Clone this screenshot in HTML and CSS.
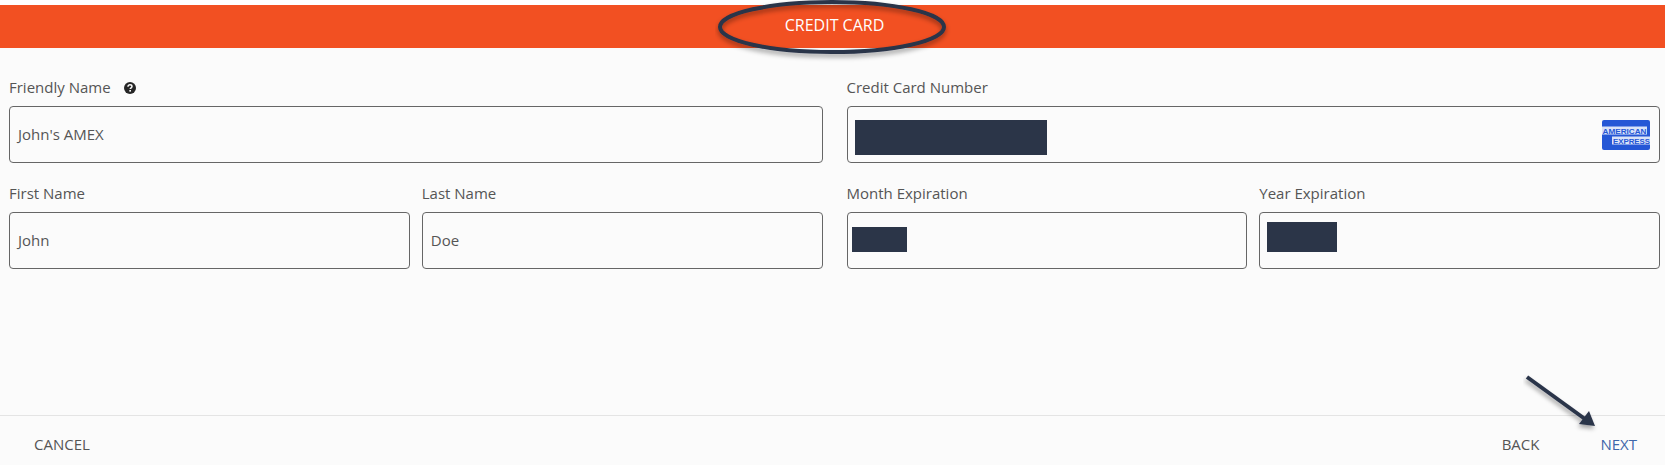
FILE: index.html
```html
<!DOCTYPE html>
<html lang="en">
<head>
  <meta charset="UTF-8" />
  <title>Credit Card</title>
  <link rel="stylesheet" href="styles.css">
</head>
<body>
  <div class="header">CREDIT CARD</div>

  <!-- callout ring around the title -->
  <svg class="ring" width="240" height="66" viewBox="0 0 240 66">
    <defs>
      <filter id="soft" x="-20%" y="-30%" width="140%" height="170%">
        <feDropShadow dx="0" dy="3" stdDeviation="2.5" flood-color="#000" flood-opacity="0.4" />
      </filter>
    </defs>
    <ellipse cx="117" cy="27" rx="112" ry="25" fill="none" stroke="#2a344a" stroke-width="4" filter="url(#soft)" />
  </svg>

  <div class="form">
    <div class="col">
      <div class="row">
        <div class="group">
          <div class="lbl">Friendly Name
            <svg class="help" width="12" height="12" viewBox="0 0 12 12">
              <circle cx="6" cy="6" r="6" fill="#262626" />
              <path d="M4 4.7C4 3.5 4.9 2.8 6 2.8S8 3.5 8 4.5C8 5.8 6.2 5.8 6.2 7.1" fill="none" stroke="#fbfbfb" stroke-width="1.5" />
              <rect x="5.3" y="8" width="1.7" height="1.6" fill="#fbfbfb" />
            </svg>
          </div>
          <div class="field">John's AMEX</div>
        </div>
      </div>
      <div class="row">
        <div class="group">
          <div class="lbl">First Name</div>
          <div class="field">John</div>
        </div>
        <div class="group">
          <div class="lbl">Last Name</div>
          <div class="field">Doe</div>
        </div>
      </div>
    </div>

    <div class="col">
      <div class="row">
        <div class="group">
          <div class="lbl">Credit Card Number</div>
          <div class="field">
            <span class="redact redact-card"></span>
            <svg class="amex" width="48" height="30" viewBox="0 0 48 30">
              <rect width="48" height="30" rx="2" fill="#2557d6" />
              <rect x="0" y="6.5" width="45" height="8" fill="#d9e2f8" />
              <rect x="10" y="16.5" width="38" height="8" fill="#d9e2f8" />
              <text class="amex-text" x="0.5" y="13.5" textLength="44" lengthAdjust="spacingAndGlyphs">AMERICAN</text>
              <text class="amex-text" x="11" y="23.5" textLength="37" lengthAdjust="spacingAndGlyphs">EXPRESS</text>
            </svg>
          </div>
        </div>
      </div>
      <div class="row">
        <div class="group">
          <div class="lbl">Month Expiration</div>
          <div class="field"><span class="redact redact-month"></span></div>
        </div>
        <div class="group">
          <div class="lbl">Year Expiration</div>
          <div class="field"><span class="redact redact-year"></span></div>
        </div>
      </div>
    </div>
  </div>

  <div class="footer">
    <a class="action">CANCEL</a>
    <div class="right">
      <a class="action">BACK</a>
      <a class="action next">NEXT</a>
    </div>
  </div>

  <!-- callout arrow pointing at NEXT -->
  <svg class="arrow" width="90" height="70" viewBox="0 0 90 70">
    <defs>
      <filter id="soft2" x="-20%" y="-20%" width="150%" height="150%">
        <feDropShadow dx="-1" dy="3" stdDeviation="2" flood-color="#000" flood-opacity="0.35" />
      </filter>
    </defs>
    <g filter="url(#soft2)" fill="#2a344a">
      <path d="M4 5L62 47" stroke="#2a344a" stroke-width="4" />
      <path d="M72 54L56 52L66 39Z" />
    </g>
  </svg>
</body>
</html>
```

FILE: styles.css
```css
html, body {
  margin: 0;
  height: 465px;
  overflow: hidden;
}
body {
  position: relative;
  display: flex;
  flex-direction: column;
  padding-top: 5px;
  box-sizing: border-box;
  background-color: #fbfbfb;
  font-family: "Open Sans", Arial, sans-serif;
  font-size: 15px;
  color: #555;
}
body::before {
  content: "";
  position: absolute;
  top: 0;
  left: 0;
  right: 0;
  height: 5px;
  background-color: #fff;
}
.header {
  height: 43px;
  line-height: 41px;
  padding-left: 4px;
  text-align: center;
  background-color: #f25022;
  color: #fff;
  font-size: 16px;
  font-weight: 500;
}
.ring {
  position: absolute;
  top: 0;
  left: 715px;
}
.form {
  flex: 1;
  display: flex;
  gap: 24px;
  padding: 29px 5px 0 9px;
}
.col {
  flex: 1;
  display: flex;
  flex-direction: column;
  gap: 20px;
}
.row {
  display: flex;
  gap: 12px;
}
.group {
  flex: 1;
}
.lbl {
  height: 29px;
  line-height: 21px;
  color: #555;
}
.help {
  margin-left: 9px;
  vertical-align: -1px;
}
.field {
  position: relative;
  height: 57px;
  line-height: 55px;
  padding-left: 8px;
  box-sizing: border-box;
  border: 1px solid #666;
  border-radius: 4px;
  color: #555;
}
.redact {
  position: absolute;
  background-color: #2b3548;
}
.redact-card {
  left: 7px;
  top: 13px;
  width: 192px;
  height: 35px;
}
.redact-month {
  left: 4px;
  top: 14px;
  width: 55px;
  height: 25px;
}
.redact-year {
  left: 7px;
  top: 9px;
  width: 70px;
  height: 30px;
}
.amex {
  position: absolute;
  right: 9px;
  top: 13px;
}
.amex-text {
  font-family: "Liberation Sans", Arial, sans-serif;
  font-size: 8px;
  font-weight: bold;
  fill: #2557d6;
}
.footer {
  height: 50px;
  box-sizing: border-box;
  display: flex;
  justify-content: space-between;
  align-items: center;
  padding: 6px 28px 0 34px;
  border-top: 1px solid #e4e4e4;
}
.right {
  display: flex;
  gap: 61px;
}
.action {
  color: #555;
}
.next {
  color: #3e66aa;
}
.arrow {
  position: absolute;
  left: 1523px;
  top: 372px;
}
```
